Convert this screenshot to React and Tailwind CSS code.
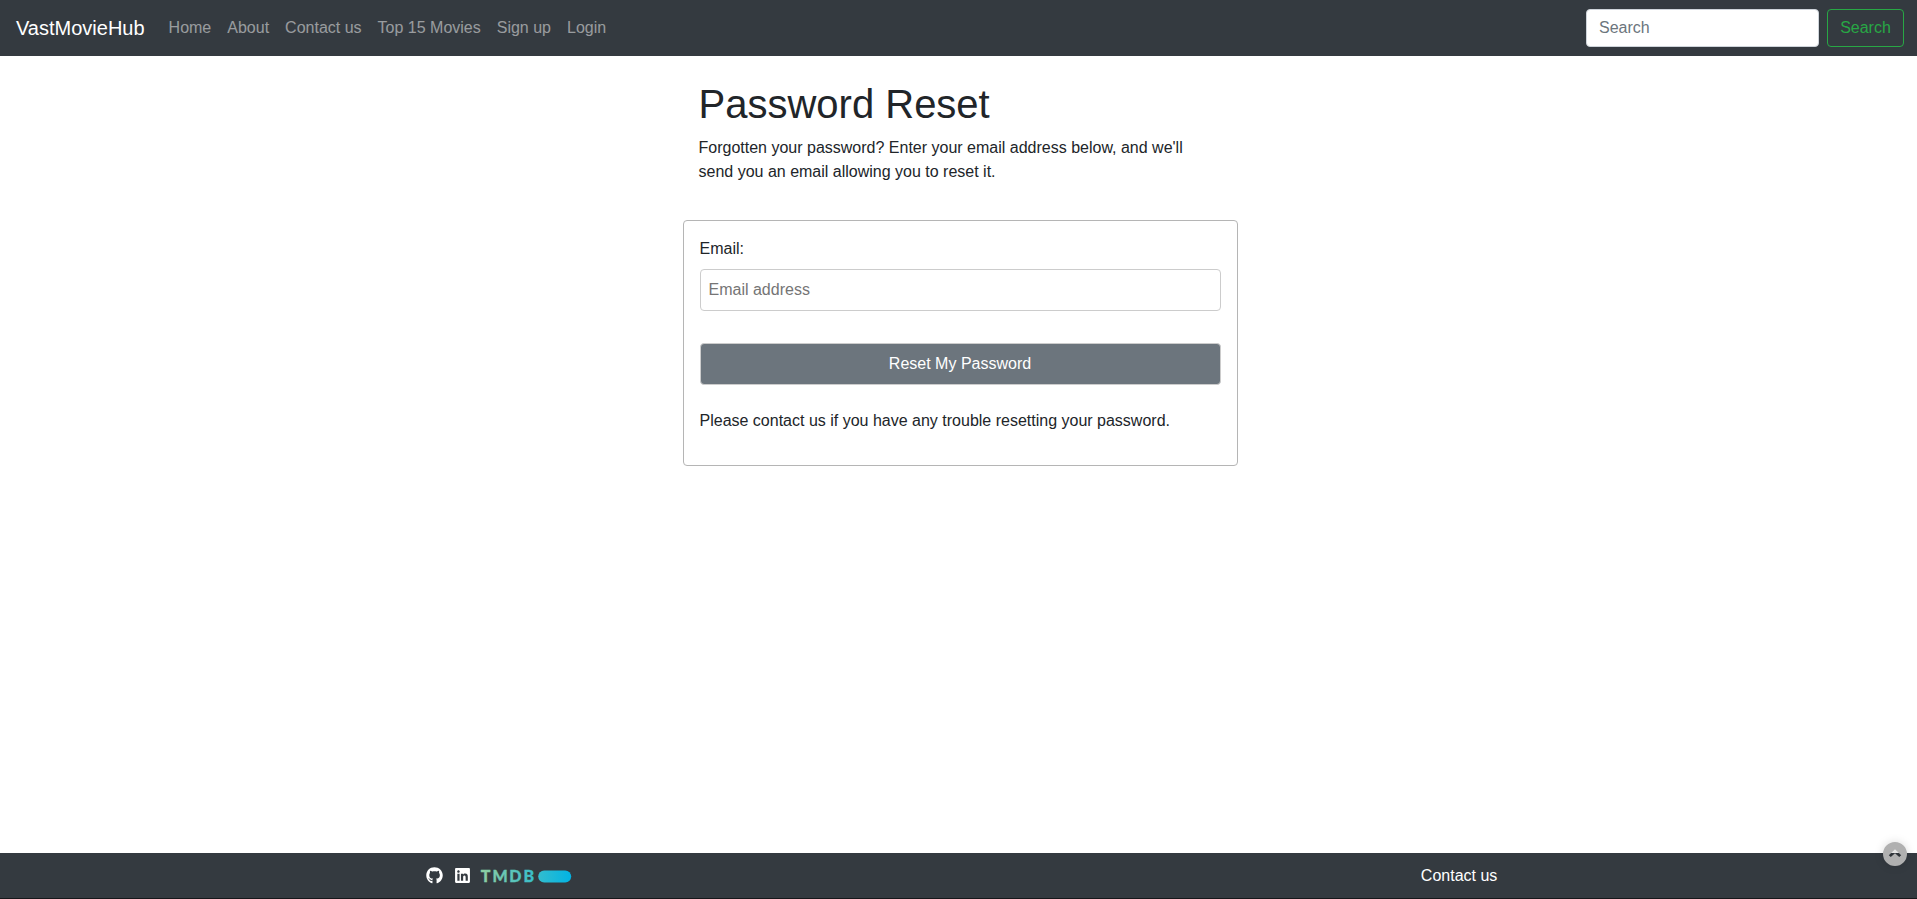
import { FaGithub, FaLinkedin } from "react-icons/fa";

const links = ["Home", "About", "Contact us", "Top 15 Movies", "Sign up", "Login"];

function Navbar() {
  return (
    <nav className="flex h-14 items-center bg-[#343a40] pl-4 pr-[13px]">
      <a href="#" className="mr-4 text-[20px] leading-[30px] text-white">VastMovieHub</a>
      <ul className="flex flex-1">
        {links.map((l) => (
          <li key={l}>
            <a href="#" className="block p-2 text-white/50">{l}</a>
          </li>
        ))}
      </ul>
      <form className="flex gap-2">
        <input placeholder="Search" aria-label="Search" className="h-[38px] w-[233px] rounded-[4px] border border-[#ced4da] bg-white px-3 placeholder:text-[#6c757d]" />
        <button type="button" className="h-[38px] w-[77px] rounded-[4px] border border-[#28a745] text-center text-[#28a745]">Search</button>
      </form>
    </nav>
  );
}

function TmdbLogo() {
  return (
    <svg width="91" height="25" viewBox="0 -6 91 25" className="ml-[10.5px] mt-px block overflow-visible">
      <defs>
        <linearGradient id="tmdb" gradientUnits="userSpaceOnUse" x1="0" y1="0" x2="91" y2="0">
          <stop offset="0" stopColor="#90cea1" />
          <stop offset="0.56" stopColor="#3cbec9" />
          <stop offset="1" stopColor="#00b3e5" />
        </linearGradient>
      </defs>
      <text x="-0.2 11.4 28.3 42.6" y="12.3" fill="url(#tmdb)" stroke="url(#tmdb)" strokeWidth="0.3" fontFamily="Lato, sans-serif" fontWeight="900" fontSize="16">TMDB</text>
      <rect x="57.2" y="0.5" width="33" height="12" rx="6" fill="url(#tmdb)" />
    </svg>
  );
}

export default function App() {
  return (
    <div className="relative flex h-[899px] flex-col overflow-hidden bg-white font-['Liberation_Sans',Arial,sans-serif] text-[16px] leading-6 text-[#212529]">
      <Navbar />
      <main className="ml-[682.5px] w-[555px] flex-1 pt-6">
        <div className="px-4">
          <h1 className="mb-2 text-[40px] font-medium leading-[48px]">Password Reset</h1>
          <p className="w-[500px]">Forgotten your password? Enter your email address below, and we'll send you an email allowing you to reset it.</p>
        </div>
        <section className="mt-9 h-[246px] rounded-[4px] border border-[#b5b5b5] px-4 pt-4">
          <label htmlFor="email" className="mb-2 block">Email:</label>
          <input id="email" placeholder="Email address" className="block h-[42px] w-full rounded-[4px] border border-[#cccccc] px-2 placeholder:text-[#757575]" />
          <button type="button" className="mt-8 block h-[42px] w-full rounded-[4px] border border-[#cccccc] bg-[#6c757d] text-white">Reset My Password</button>
          <p className="mt-6">Please contact us if you have any trouble resetting your password.</p>
        </section>
      </main>
      <footer className="flex h-[46px] border-b border-[#16171a] bg-[#343a40] text-white">
        <div className="flex h-[45px] flex-1 items-center pl-[426px]">
          <FaGithub size={17} className="-mt-px" />
          <FaLinkedin size={17} className="-mt-px ml-[10.5px]" />
          <TmdbLogo />
        </div>
        <a href="#" className="mr-[419.7px] pt-[11px]">Contact us</a>
      </footer>
      <svg className="absolute left-[1883px] top-[842px] h-6 w-6 overflow-visible drop-shadow-[0_0_4px_rgba(0,0,0,0.15)]" viewBox="0 0 24 24" aria-hidden="true">
        <path fill="#b0b0b0" fillRule="evenodd" d="M12 0a12 12 0 1 0 0 24a12 12 0 1 0 0-24ZM12 7.2L18.2 13.2L16.2 14.9L12 11.3L7.8 14.9L5.8 13.2Z" />
      </svg>
    </div>
  );
}
